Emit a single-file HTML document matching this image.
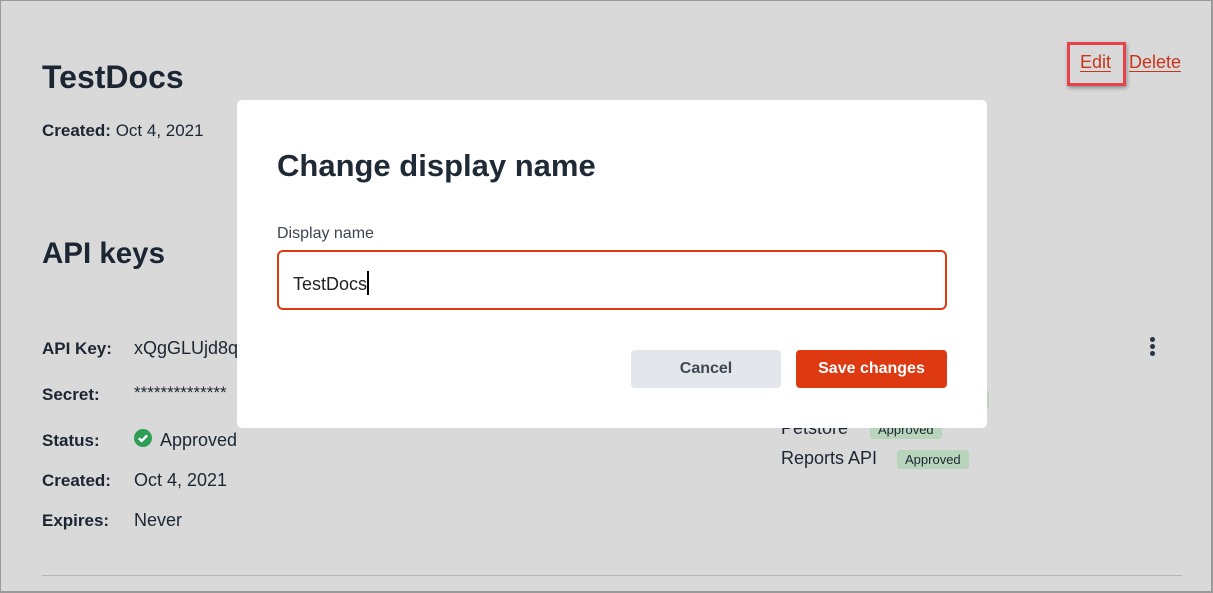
<!DOCTYPE html>
<html><head><meta charset="utf-8"><style>
*{margin:0;padding:0;box-sizing:border-box}
html,body{width:1213px;height:593px;overflow:hidden}
body{background:#d9d9d9;font-family:"Liberation Sans",sans-serif;color:#1c2633;position:relative}
.frame{position:absolute;left:0;top:0;width:1213px;height:593px;border:1px solid #9a9a9a;border-width:1px 2px 2px 1px;pointer-events:none}
.a{position:absolute;white-space:nowrap}
.b{font-weight:bold}
.lab{font-size:17px;font-weight:bold}
.val{font-size:18px}
.badge{background:#b8d4bb;color:#1c2633;font-size:13px;padding:2px 8px;border-radius:3px}
.lnk{color:#c8341a;text-decoration:underline;font-size:18px;text-underline-offset:3px}
</style></head><body>
<div class="frame"></div>
<div class="a b" style="left:42px;top:59px;font-size:32px">TestDocs</div>
<div class="a" style="left:42px;top:121px;font-size:17px"><b>Created:</b> Oct 4, 2021</div>
<div class="a b" style="left:42px;top:237px;font-size:29.5px">API keys</div>
<div class="a lab" style="left:42px;top:339px">API Key:</div>
<div class="a val" style="left:134px;top:338px">xQgGLUjd8q</div>
<div class="a lab" style="left:42px;top:385px">Secret:</div>
<div class="a val" style="left:134px;top:383px;font-size:17px">**************</div>
<div class="a lab" style="left:42px;top:431px">Status:</div>
<svg class="a" style="left:134px;top:429px" width="18" height="18" viewBox="0 0 18 18"><circle cx="9" cy="9" r="9" fill="#2e9e57"/><path d="M4.8 9.3l2.8 2.7 5.6-5.6" stroke="#fff" stroke-width="2.4" fill="none"/></svg>
<div class="a val" style="left:160px;top:430px">Approved</div>
<div class="a lab" style="left:42px;top:471px">Created:</div>
<div class="a val" style="left:134px;top:470px">Oct 4, 2021</div>
<div class="a lab" style="left:42px;top:511px">Expires:</div>
<div class="a val" style="left:134px;top:510px">Never</div>
<div class="a" style="left:42px;top:575px;width:1140px;height:1px;background:#b5b5b5"></div>
<div class="a val" style="left:781px;top:418px">Petstore</div>
<div class="a badge" style="left:870px;top:420px">Approved</div>
<div class="a val" style="left:781px;top:448px">Reports API</div>
<div class="a badge" style="left:897px;top:450px">Approved</div>
<div class="a" style="left:960px;top:390px;width:29px;height:19px;background:#b8d4bb;border-radius:3px"></div>
<div class="a" style="left:1150px;top:337px;width:6px"><div style="width:5px;height:5px;border-radius:50%;background:#2a3340;margin-bottom:2px"></div><div style="width:5px;height:5px;border-radius:50%;background:#2a3340;margin-bottom:2px"></div><div style="width:5px;height:5px;border-radius:50%;background:#2a3340"></div></div>
<div class="a lnk" style="left:1080px;top:52px">Edit</div>
<div class="a lnk" style="left:1129px;top:52px">Delete</div>
<div class="a" style="left:1067px;top:42px;width:59px;height:44px;border:3px solid #e8434a;box-shadow:1px 2px 4px rgba(0,0,0,.35)"></div>
<div class="a" style="left:237px;top:100px;width:750px;height:328px;background:#fff;border-radius:5px">
 <div class="a b" style="left:40px;top:48px;font-size:31px;color:#1f2a36">Change display name</div>
 <div class="a" style="left:40px;top:125px;font-size:16px;color:#3b4450">Display name</div>
 <div class="a" style="left:40px;top:150px;width:670px;height:60px;border:2px solid #de3a12;border-radius:6px">
  <div class="a" style="left:14px;top:19px;font-size:18px;color:#222">TestDocs<span style="display:inline-block;width:2px;height:24px;background:#000;vertical-align:-5px"></span></div>
 </div>
 <div class="a b" style="left:394px;top:250px;width:150px;height:38px;background:#e3e6ea;border-radius:4px;color:#3e4855;font-size:16px;text-align:center;line-height:38px">Cancel</div>
 <div class="a b" style="left:559px;top:250px;width:151px;height:38px;background:#de3a12;border-radius:4px;color:#fff;font-size:16px;text-align:center;line-height:38px">Save changes</div>
</div>
</body></html>
